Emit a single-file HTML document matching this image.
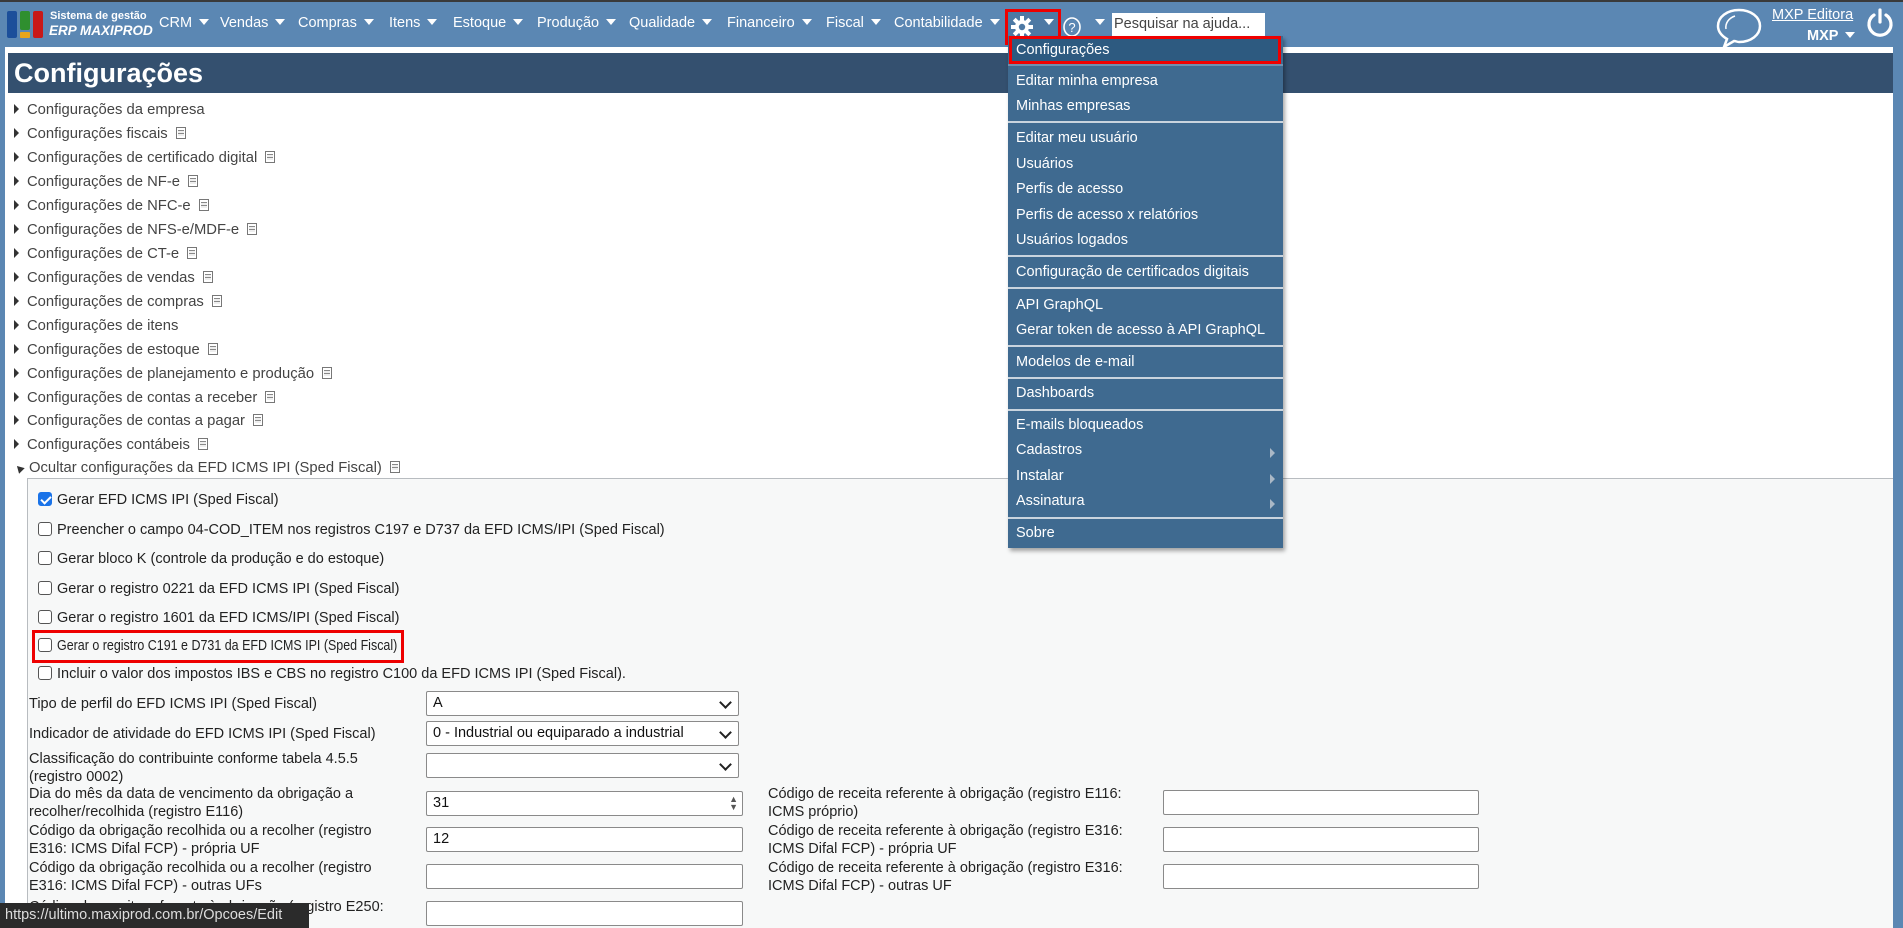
<!DOCTYPE html>
<html><head><meta charset="utf-8"><style>
*{box-sizing:border-box;margin:0;padding:0}
body{width:1903px;height:928px;overflow:hidden;background:#5b87b3;font-family:"Liberation Sans",sans-serif;font-size:14.5px;color:#333;position:relative}
.a{position:absolute;white-space:nowrap}
.top{position:absolute;left:0;top:0;width:1903px;height:2px;background:#3a3a3a}
.nav{color:#fff;font-size:14.5px;top:15px}
.tri{display:inline-block;width:0;height:0;border-left:5px solid transparent;border-right:5px solid transparent;border-top:6px solid #fff;margin-left:7px;vertical-align:2px}
.content{position:absolute;left:5px;top:47px;width:1888px;height:881px;background:#fff}
.hdr{position:absolute;left:8px;top:53px;width:1885px;height:40px;background:#34506f;color:#fff;font-weight:bold;font-size:27px;padding:5px 0 0 6px}
.li{left:14px;color:#444;font-size:14.8px}
.arr{display:inline-block;width:0;height:0;border-top:5px solid transparent;border-bottom:5px solid transparent;border-left:5px solid #333;margin-right:8px;vertical-align:0}
.doc{display:inline-block;width:10px;height:12px;border:1px solid #777;background:#eee;margin-left:8px;vertical-align:-1px;background-image:repeating-linear-gradient(#eee 0 2px,#888 2px 3px);background-clip:content-box;padding:2px 1px}
.panel{position:absolute;left:27px;top:478px;width:1866px;height:450px;background:#f7f8f8;border:1px solid #b8bcc0;border-right:none;border-bottom:none}
.cb{left:38px;color:#222}
.box{display:inline-block;width:14px;height:14px;border:1px solid #555;border-radius:3px;background:#fff;vertical-align:-2px;margin-right:5px}
.box.on{background:#1a73e8;border-color:#1a73e8;position:relative}
.box.on:after{content:"";position:absolute;left:4px;top:1px;width:4px;height:8px;border:solid #fff;border-width:0 2px 2px 0;transform:rotate(45deg)}
.lbl{left:29px;color:#222;line-height:18px;white-space:normal;width:350px}
.lbl2{left:768px;color:#222;line-height:18px;width:380px;white-space:normal}
.inp{position:absolute;background:#fff;border:1px solid #8a8a8a;border-radius:2px;height:25px;padding:3px 6px;color:#111;font-size:14.5px}
.sel:after{content:"";position:absolute;right:8px;top:6px;width:7px;height:7px;border:solid #222;border-width:0 2px 2px 0;transform:rotate(45deg)}
.menu{position:absolute;left:1008px;top:36px;width:275px;height:512px;background:#3f6a90;box-shadow:2px 3px 4px rgba(0,0,0,.35)}
.mi{position:absolute;left:8px;color:#fff;font-size:14.5px;white-space:nowrap}
.sep{position:absolute;left:0;width:275px;height:2px;background:#c9d4de}
.sub{position:absolute;right:8px;width:0;height:0;border-top:5px solid transparent;border-bottom:5px solid transparent;border-left:5px solid #aab8c6}
</style></head><body>
<div class="top"></div>
<div class="a" style="left:7px;top:11px;width:10px;height:27px;background:#1c4f9a;border-radius:2px"></div>
<div class="a" style="left:20px;top:11px;width:10px;height:19px;background:#2f8f2f;border-radius:2px"></div>
<div class="a" style="left:20px;top:32px;width:10px;height:6px;background:#e8a51a;border-radius:1px"></div>
<div class="a" style="left:33px;top:11px;width:10px;height:27px;background:#c81818;border-radius:2px"></div>
<div class="a" style="left:50px;top:10px;color:#fff;font-size:11px;font-weight:bold">Sistema de gestão</div>
<div class="a" style="left:49px;top:23px;color:#fff;font-size:13.5px;font-weight:bold;font-style:italic">ERP MAXIPROD</div>
<div class="a nav" style="left:159px">CRM<span class="tri"></span></div>
<div class="a nav" style="left:220px">Vendas<span class="tri"></span></div>
<div class="a nav" style="left:298px">Compras<span class="tri"></span></div>
<div class="a nav" style="left:389px">Itens<span class="tri"></span></div>
<div class="a nav" style="left:453px">Estoque<span class="tri"></span></div>
<div class="a nav" style="left:537px">Produção<span class="tri"></span></div>
<div class="a nav" style="left:629px">Qualidade<span class="tri"></span></div>
<div class="a nav" style="left:727px">Financeiro<span class="tri"></span></div>
<div class="a nav" style="left:826px">Fiscal<span class="tri"></span></div>
<div class="a nav" style="left:894px">Contabilidade<span class="tri"></span></div>
<div class="a" style="left:1005px;top:9px;width:56px;height:36px;border:3px solid #e00;background:#4d79a4"></div>
<svg class="a" style="left:1010px;top:15px" width="24" height="24" viewBox="0 0 24 24"><g fill="#fff"><circle cx="12" cy="12" r="7"/><g id="t"><rect x="10" y="1" width="4" height="22"/></g><use href="#t" transform="rotate(45 12 12)"/><use href="#t" transform="rotate(90 12 12)"/><use href="#t" transform="rotate(135 12 12)"/></g><circle cx="12" cy="12" r="3.2" fill="#4d79a4"/></svg>
<span class="a tri" style="left:1037px;top:19px"></span>
<svg class="a" style="left:1062px;top:16px" width="20" height="22" viewBox="0 0 20 22"><ellipse cx="10" cy="11" rx="8" ry="9" fill="none" stroke="#fff" stroke-width="1.6"/><text x="10" y="16" fill="#fff" font-size="13" text-anchor="middle" font-family="Liberation Sans">?</text></svg>
<span class="a tri" style="left:1088px;top:19px"></span>
<div class="a" style="left:1112px;top:13px;width:153px;height:24px;background:#fff;color:#444;font-size:14.5px;padding:3px 2px">Pesquisar na ajuda...</div>
<svg class="a" style="left:1714px;top:7px" width="50" height="42" viewBox="0 0 50 42"><path d="M25 3C13 3 4 10 4 19c0 6 4 10 9 13l-3 8 10-6c2 0 3 1 5 1 12 0 21-7 21-16S37 3 25 3z" fill="none" stroke="#fff" stroke-width="2.5"/><path d="M12 22c-1-6 3-11 9-13" fill="none" stroke="#fff" stroke-width="1.5"/></svg>
<div class="a" style="left:1772px;top:7px;color:#fff;font-size:14.5px;text-decoration:underline">MXP Editora</div>
<div class="a" style="left:1807px;top:28px;color:#fff;font-size:14.5px;font-weight:bold">MXP<span class="tri"></span></div>
<svg class="a" style="left:1866px;top:8px" width="28" height="30" viewBox="0 0 28 30"><path d="M8 7A11 11 0 1 0 20 7" fill="none" stroke="#fff" stroke-width="3.2" stroke-linecap="round"/><line x1="14" y1="2" x2="14" y2="14" stroke="#fff" stroke-width="3.2" stroke-linecap="round"/></svg>
<div class="content"></div>
<div class="hdr">Configurações</div>
<div class="a li" style="top:102px"><span class="arr"></span>Configurações da empresa</div>
<div class="a li" style="top:126px"><span class="arr"></span>Configurações fiscais<span class="doc"></span></div>
<div class="a li" style="top:150px"><span class="arr"></span>Configurações de certificado digital<span class="doc"></span></div>
<div class="a li" style="top:174px"><span class="arr"></span>Configurações de NF-e<span class="doc"></span></div>
<div class="a li" style="top:198px"><span class="arr"></span>Configurações de NFC-e<span class="doc"></span></div>
<div class="a li" style="top:222px"><span class="arr"></span>Configurações de NFS-e/MDF-e<span class="doc"></span></div>
<div class="a li" style="top:246px"><span class="arr"></span>Configurações de CT-e<span class="doc"></span></div>
<div class="a li" style="top:270px"><span class="arr"></span>Configurações de vendas<span class="doc"></span></div>
<div class="a li" style="top:294px"><span class="arr"></span>Configurações de compras<span class="doc"></span></div>
<div class="a li" style="top:318px"><span class="arr"></span>Configurações de itens</div>
<div class="a li" style="top:342px"><span class="arr"></span>Configurações de estoque<span class="doc"></span></div>
<div class="a li" style="top:366px"><span class="arr"></span>Configurações de planejamento e produção<span class="doc"></span></div>
<div class="a li" style="top:390px"><span class="arr"></span>Configurações de contas a receber<span class="doc"></span></div>
<div class="a li" style="top:413px"><span class="arr"></span>Configurações de contas a pagar<span class="doc"></span></div>
<div class="a li" style="top:437px"><span class="arr"></span>Configurações contábeis<span class="doc"></span></div>
<div class="a li" style="top:460px"><span style="display:inline-block;width:0;height:0;border-left:4px solid transparent;border-right:4px solid transparent;border-bottom:7px solid #333;margin-right:7px;transform:rotate(-45deg) translate(1px,1px)"></span>Ocultar configurações da EFD ICMS IPI (Sped Fiscal)<span class="doc"></span></div>
<div class="panel"></div>
<div class="a cb" style="top:492px"><span class="box on"></span>Gerar EFD ICMS IPI (Sped Fiscal)</div>
<div class="a cb" style="top:522px"><span class="box"></span>Preencher o campo 04-COD_ITEM nos registros C197 e D737 da EFD ICMS/IPI (Sped Fiscal)</div>
<div class="a cb" style="top:551px"><span class="box"></span>Gerar bloco K (controle da produção e do estoque)</div>
<div class="a cb" style="top:581px"><span class="box"></span>Gerar o registro 0221 da EFD ICMS IPI (Sped Fiscal)</div>
<div class="a cb" style="top:610px"><span class="box"></span>Gerar o registro 1601 da EFD ICMS/IPI (Sped Fiscal)</div>
<div class="a" style="left:32px;top:630px;width:372px;height:33px;border:3px solid #e00"></div>
<div class="a cb" style="top:638px"><span class="box"></span><span style="display:inline-block;transform:scaleX(0.86);transform-origin:left">Gerar o registro C191 e D731 da EFD ICMS IPI (Sped Fiscal)</span></div>
<div class="a cb" style="top:666px"><span class="box"></span>Incluir o valor dos impostos IBS e CBS no registro C100 da EFD ICMS IPI (Sped Fiscal).</div>
<div class="a lbl" style="top:695px">Tipo de perfil do EFD ICMS IPI (Sped Fiscal)</div>
<div class="inp sel" style="left:426px;top:691px;width:313px">A</div>
<div class="a lbl" style="top:725px">Indicador de atividade do EFD ICMS IPI (Sped Fiscal)</div>
<div class="inp sel" style="left:426px;top:721px;width:313px">0 - Industrial ou equiparado a industrial</div>
<div class="a lbl" style="top:750px">Classificação do contribuinte conforme tabela 4.5.5 (registro 0002)</div>
<div class="inp sel" style="left:426px;top:753px;width:313px"></div>
<div class="a lbl" style="top:785px">Dia do mês da data de vencimento da obrigação a recolher/recolhida (registro E116)</div>
<div class="inp" style="left:426px;top:791px;width:317px">31<span style="position:absolute;right:4px;top:3px;font-size:9px;line-height:8px;color:#555">▲<br>▼</span></div>
<div class="a lbl2" style="top:785px">Código de receita referente à obrigação (registro E116: ICMS próprio)</div>
<div class="inp" style="left:1163px;top:790px;width:316px"></div>
<div class="a lbl" style="top:822px">Código da obrigação recolhida ou a recolher (registro E316: ICMS Difal FCP) - própria UF</div>
<div class="inp" style="left:426px;top:827px;width:317px">12</div>
<div class="a lbl2" style="top:822px">Código de receita referente à obrigação (registro E316: ICMS Difal FCP) - própria UF</div>
<div class="inp" style="left:1163px;top:827px;width:316px"></div>
<div class="a lbl" style="top:859px">Código da obrigação recolhida ou a recolher (registro E316: ICMS Difal FCP) - outras UFs</div>
<div class="inp" style="left:426px;top:864px;width:317px"></div>
<div class="a lbl2" style="top:859px">Código de receita referente à obrigação (registro E316: ICMS Difal FCP) - outras UF</div>
<div class="inp" style="left:1163px;top:864px;width:316px"></div>
<div class="a lbl" style="top:898px;width:420px">Código de receita referente à obrigação (registro E250:</div>
<div class="inp" style="left:426px;top:901px;width:317px"></div>
<div class="a" style="left:0;top:903px;width:309px;height:25px;background:#2b2b2b;color:#ddd;font-size:14.5px;padding:4px 5px">https://ultimo.maxiprod.com.br/Opcoes/Edit</div>
<div class="menu">
<div class="a" style="left:1px;top:0;width:272px;height:28px;background:#2d5a80;border:3px solid #e00"></div>
<div class="mi" style="top:6px">Configurações</div>
<div class="sep" style="top:28px;background:#6f8fae"></div>
<div class="mi" style="top:37px">Editar minha empresa</div>
<div class="mi" style="top:62px">Minhas empresas</div>
<div class="sep" style="top:85px"></div>
<div class="mi" style="top:94px">Editar meu usuário</div>
<div class="mi" style="top:120px">Usuários</div>
<div class="mi" style="top:145px">Perfis de acesso</div>
<div class="mi" style="top:171px">Perfis de acesso x relatórios</div>
<div class="mi" style="top:196px">Usuários logados</div>
<div class="sep" style="top:219px"></div>
<div class="mi" style="top:228px">Configuração de certificados digitais</div>
<div class="sep" style="top:251px"></div>
<div class="mi" style="top:261px">API GraphQL</div>
<div class="mi" style="top:286px">Gerar token de acesso à API GraphQL</div>
<div class="sep" style="top:309px"></div>
<div class="mi" style="top:318px">Modelos de e-mail</div>
<div class="sep" style="top:341px"></div>
<div class="mi" style="top:349px">Dashboards</div>
<div class="sep" style="top:373px"></div>
<div class="mi" style="top:381px">E-mails bloqueados</div>
<div class="mi" style="top:406px">Cadastros</div><div class="sub" style="top:412px"></div>
<div class="mi" style="top:432px">Instalar</div><div class="sub" style="top:438px"></div>
<div class="mi" style="top:457px">Assinatura</div><div class="sub" style="top:463px"></div>
<div class="sep" style="top:481px"></div>
<div class="mi" style="top:489px">Sobre</div>
</div>
</body></html>
